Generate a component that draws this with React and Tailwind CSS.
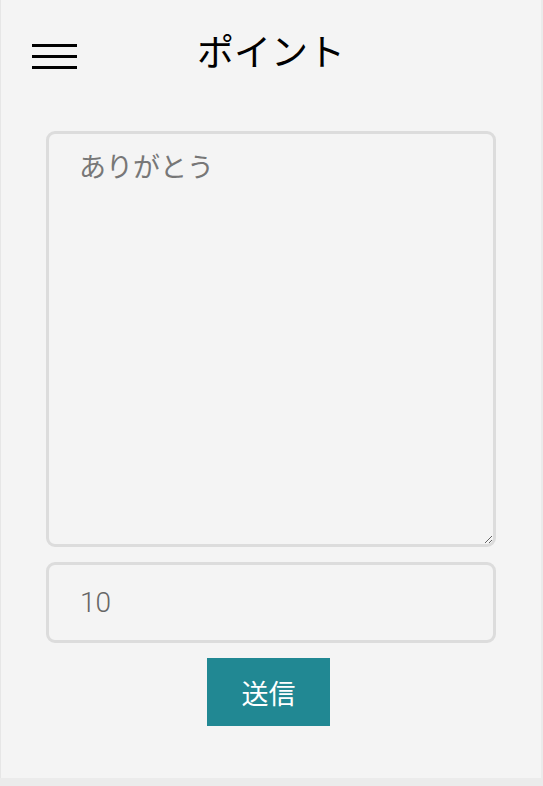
export default function App() {
  return (
    <div className="min-h-[786px] w-[543px] bg-[#ebebeb]" style={{ fontFamily: '"Noto Sans CJK JP", "Noto Sans", sans-serif' }}>
      <div className="w-[541px] h-[778px] bg-[#f4f4f4] border-l border-[#e6e6e6]">
        <header className="relative h-[104px] flex items-start">
          <button className="absolute left-[31px] top-[44px] w-[45px] flex flex-col gap-[8px]">
            <span className="block h-[3px] bg-black" />
            <span className="block h-[3px] bg-black" />
            <span className="block h-[3px] bg-black" />
          </button>
          <h1 className="w-full text-center pt-[25px] text-[37px] leading-[50px] text-black font-normal">
            ポイント
          </h1>
        </header>
        <form className="px-[45px] pt-[27px] flex flex-col">
          <textarea
            placeholder="ありがとう"
            className="w-[450px] h-[416px] border-[3px] border-[#dcdcdc] rounded-[9px] bg-[#f4f4f4] px-[30px] pt-[13px] text-[27px] leading-[38px] text-[#333] placeholder:text-[#777] outline-none"
          />
          <input
            type="text"
            placeholder="10"
            className="mt-[15px] w-[450px] h-[81px] border-[3px] border-[#dcdcdc] rounded-[9px] bg-[#f4f4f4] px-[31px] text-[28px] font-light text-[#333] placeholder:text-[#666] outline-none"
            style={{ fontFamily: 'Roboto, "Noto Sans CJK JP", sans-serif' }}
          />
          <button
            type="button"
            className="mt-[15px] ml-[161px] w-[123px] h-[68px] bg-[#218893] text-white text-[27px] leading-none"
          >
            送信
          </button>
        </form>
      </div>
    </div>
  );
}
